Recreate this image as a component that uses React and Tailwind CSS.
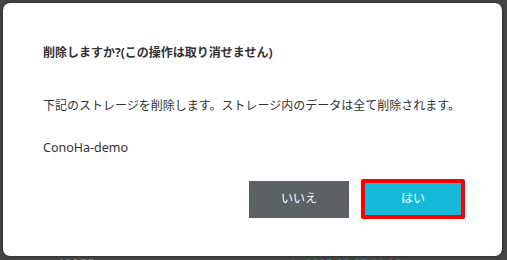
export default function App() {
  return (
    <div className="h-[260px] w-[507px] overflow-hidden bg-[#444444] p-[3px]" style={{ fontFamily: '"Noto Sans", "Noto Sans CJK JP", sans-serif' }}>
      <div className="flex h-[253px] w-[499px] flex-col rounded-[7px] bg-white pl-[40px] pr-[37px] text-[#333333] shadow-[0_0_3px_rgba(0,0,0,0.6)]">
        <h2 className="mt-[42px] whitespace-nowrap text-[12px] font-bold leading-[16px]">削除しますか?(この操作は取り消せません)</h2>
        <p className="mt-[37px] whitespace-nowrap text-[12px] leading-[16px]">下記のストレージを削除します。ストレージ内のデータは全て削除されます。</p>
        <p className="mt-[26px] text-[12.5px] leading-[16px]">ConoHa-demo</p>
        <div className="mt-[23px] flex items-center justify-end gap-[12px]">
          <button className="h-[37px] w-[100px] bg-[#5c6264] text-[12px] text-white">いいえ</button>
          <button className="h-[40px] w-[104px] rounded-[2px] border-[4px] border-[#ff0000] bg-[#15b8d7] text-[12px] text-white">はい</button>
        </div>
      </div>
      <div className="mt-[1px] flex pl-[55px] text-[12px] leading-[14px]">
        <span className="w-[224px] text-[#8a8a8a]">100GB</span>
        <span className="text-[#2a7d85]">win 2025-02-27 11:18</span>
      </div>
    </div>
  );
}
